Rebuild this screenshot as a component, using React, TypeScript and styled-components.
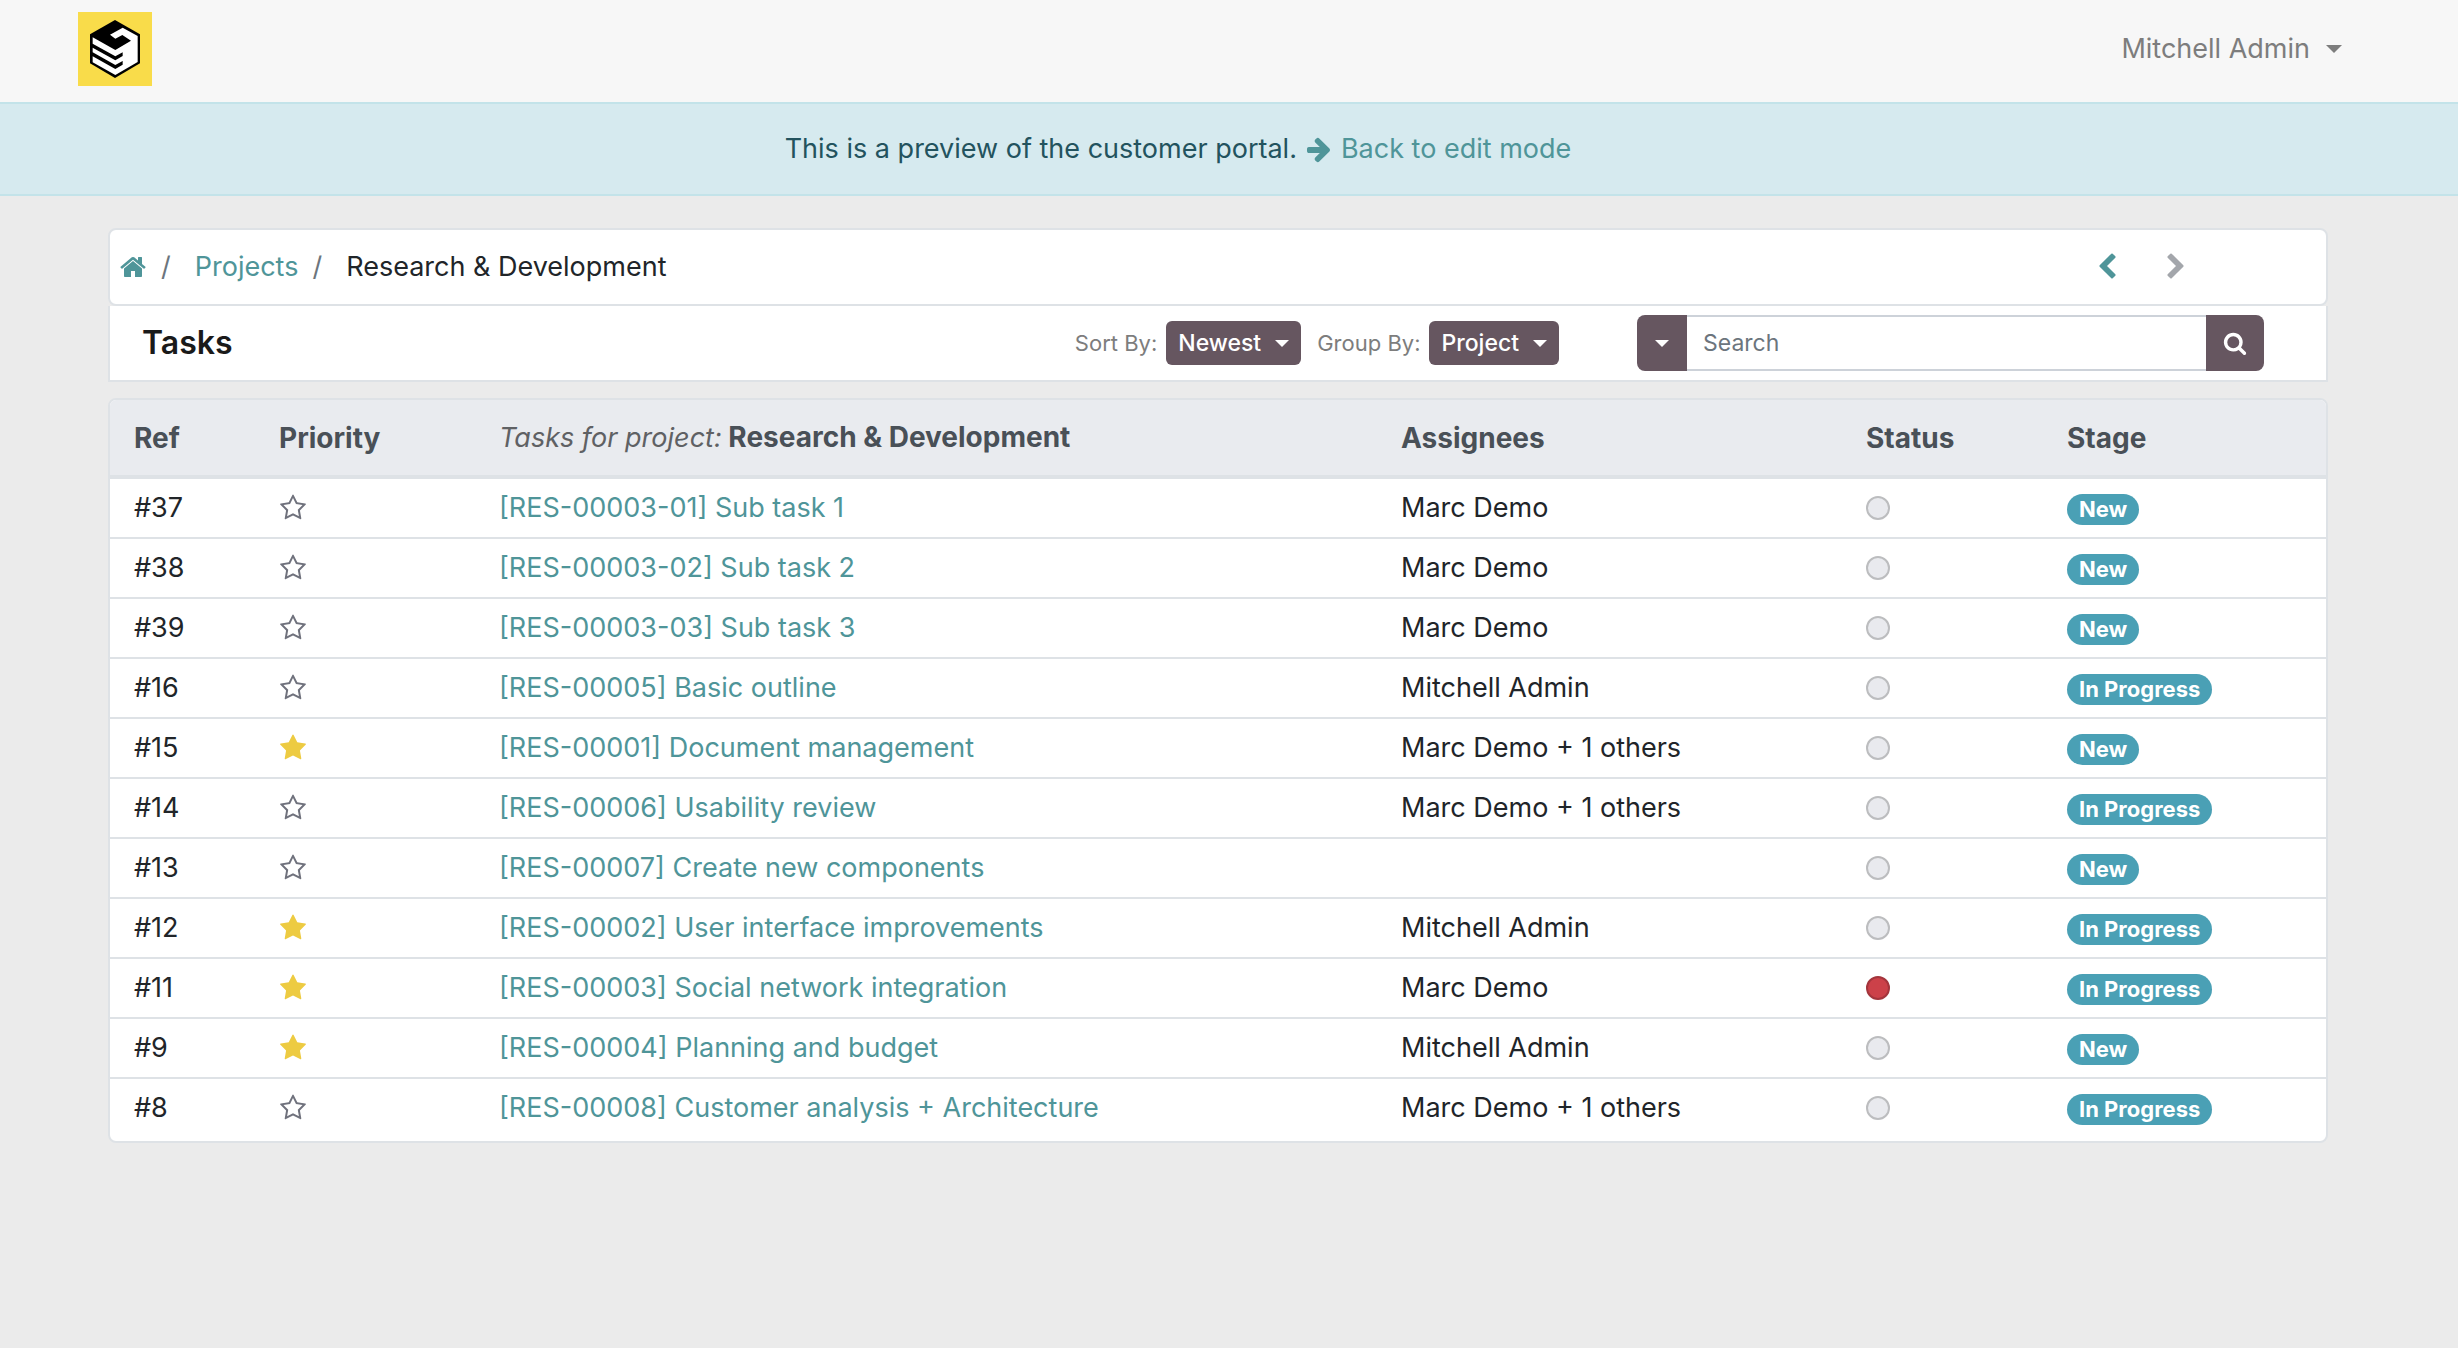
import React from 'react';
import styled, { createGlobalStyle } from 'styled-components';

const color = {
  page: '#ebebeb',
  text: '#212529',
  link: '#4f9599',
  muted: '#7d7d7d',
  border: '#dee2e6',
  headBg: '#e9ebef',
  plum: '#665660',
  badge: '#4aa0b5',
};

const GlobalStyle = createGlobalStyle`
  *, *::before, *::after { box-sizing: border-box; }
  body {
    margin: 0;
    background: ${color.page};
    color: ${color.text};
    font-family: Inter, "Liberation Sans", sans-serif;
    font-size: 27px;
    line-height: 40px;
  }
  button, input { font-family: inherit; }
`;

const Gutter = styled.div`
  padding-right: 22px;
`;

const Container = styled.div`
  max-width: 2280px;
  margin: 0 auto;
`;

const Navbar = styled.header`
  background: #f7f7f7;
`;

const NavbarRow = styled(Container)`
  display: flex;
  align-items: center;
  justify-content: space-between;
  padding: 12px 0 16px;
`;

const LogoLink = styled.a`
  display: block;
  width: 74px;
  height: 74px;
`;

const Caret = styled.span<{ $size?: number }>`
  border-top: ${(p) => p.$size ?? 7}px solid currentColor;
  border-left: ${(p) => p.$size ?? 7}px solid transparent;
  border-right: ${(p) => p.$size ?? 7}px solid transparent;
`;

const UserButton = styled.button`
  display: flex;
  align-items: center;
  gap: 16px;
  padding: 0 16px;
  border: 0;
  background: none;
  color: ${color.muted};
  font-size: 27px;
  line-height: 40px;
`;

const Banner = styled.div`
  background: #d6eaef;
  border: solid #c3e3e9;
  border-width: 2px 0;
  color: #23535e;
`;

const BannerText = styled.p`
  display: flex;
  justify-content: center;
  align-items: center;
  gap: 8px;
  margin: 0;
  padding: 25px 104px 25px 24px;
`;

const Link = styled.a`
  color: ${color.link};
  text-decoration: none;
`;

const IconLink = styled(Link)`
  display: flex;
  align-items: center;
  gap: 8px;
`;

const Glyph = styled.svg<{ $size?: number }>`
  display: block;
  flex: none;
  width: ${(p) => p.$size ?? 28}px;
  height: ${(p) => p.$size ?? 28}px;
  fill: currentColor;
`;

const Content = styled(Container)`
  padding: 32px 30px;
`;

const BreadcrumbBar = styled.div`
  display: flex;
  align-items: center;
  justify-content: space-between;
  padding: 17px 136px 17px 9px;
  border: 2px solid ${color.border};
  border-radius: 8px;
  background: #fff;
`;

const Crumbs = styled.ol`
  display: flex;
  align-items: center;
  margin: 0;
  padding: 0;
  list-style: none;
`;

const Crumb = styled.li`
  display: flex;
  align-items: center;

  & + &::before {
    content: '/';
    padding: 0 24px 0 14px;
    color: #6c757d;
  }
`;

const Pager = styled.div`
  display: flex;
  gap: 41px;
`;

const PagerLink = styled.a<{ $off?: boolean }>`
  color: ${(p) => (p.$off ? '#a3a6ab' : color.link)};
`;

const FilterBar = styled.div`
  display: flex;
  align-items: center;
  padding: 9px 62px 9px 32px;
  border: solid ${color.border};
  border-width: 0 2px 2px;
  background: #fff;
`;

const Title = styled.h1`
  margin: 0;
  font-size: 32px;
  font-weight: 600;
  color: #1a1a1a;
`;

const Filters = styled.div`
  display: flex;
  gap: 16px;
  margin-left: auto;
  margin-right: 78px;
`;

const Filter = styled.div`
  display: flex;
  align-items: center;
  gap: 9px;
`;

const FilterLabel = styled.span`
  font-size: 22px;
  color: ${color.muted};
`;

const FilterButton = styled.button`
  display: flex;
  align-items: center;
  gap: 14px;
  height: 44px;
  padding: 0 12px;
  border: 0;
  border-radius: 6px;
  background: ${color.plum};
  color: #fff;
  font-size: 23px;
  font-weight: 500;
`;

const SearchForm = styled.form`
  display: flex;
  width: 627px;
  height: 56px;
  border-radius: 8px;
  overflow: hidden;
`;

const SearchButton = styled.button<{ $width: number }>`
  display: flex;
  flex: none;
  align-items: center;
  justify-content: center;
  width: ${(p) => p.$width}px;
  padding: 0;
  border: 0;
  background: ${color.plum};
  color: #fff;
`;

const SearchInput = styled.input`
  flex: 1;
  min-width: 0;
  padding: 0 16px;
  border: solid #cdd2d9;
  border-width: 2px 0;
  border-radius: 0;
  background: #fff;
  color: ${color.text};
  font-size: 23px;

  &::placeholder {
    color: #6c757d;
    opacity: 1;
  }
`;

const TableCard = styled.div`
  margin-top: 16px;
  padding-bottom: 4px;
  border: 2px solid ${color.border};
  border-radius: 8px;
  background: #fff;
  overflow: hidden;
`;

const Table = styled.table`
  width: 100%;
  border-spacing: 0;
  table-layout: fixed;
`;

const HeadCell = styled.th<{ $width?: number }>`
  width: ${(p) => (p.$width ? `${p.$width}px` : 'auto')};
  padding: 17px 8px;
  border-bottom: 4px solid ${color.border};
  background: ${color.headBg};
  color: #495057;
  font-size: 28px;
  font-weight: 700;
  text-align: left;

  &:first-child { padding-left: 24px; }
`;

const GroupPrefix = styled.em`
  color: #5f6164;
  font-size: 27px;
  font-weight: 400;
`;

const Cell = styled.td`
  padding: 9px 8px;
  vertical-align: top;

  &:first-child { padding-left: 24px; }
  tr + tr > & { border-top: 2px solid ${color.border}; }
`;

const Mark = styled.span<{ $starred?: boolean }>`
  display: flex;
  align-items: center;
  height: 40px;
  color: ${(p) => (p.$starred ? '#edcb42' : '#6f717c')};
`;

const Dot = styled.span<{ $blocked?: boolean }>`
  width: 24px;
  height: 24px;
  border: 2px solid ${(p) => (p.$blocked ? '#a3353c' : '#bcbdbf')};
  border-radius: 50%;
  background: ${(p) => (p.$blocked ? '#cc4149' : '#e9eaee')};
`;

const Badge = styled.span`
  display: inline-block;
  padding: 0 12px;
  border-radius: 20px;
  background: ${color.badge};
  color: #fff;
  font-size: 22px;
  font-weight: 700;
  line-height: 31px;
`;

const paths = {
  home: 'M1472 992v480q0 26-19 45t-45 19h-384v-384h-256v384h-384q-26 0-45-19t-19-45v-480q0-1 .5-3t.5-3l575-474 575 474q1 2 1 6zm223-69l-62 74q-8 9-21 11h-3q-13 0-21-7l-692-577-692 577q-12 8-24 7-13-2-21-11l-62-74q-8-10-7-23.5t11-21.5l719-599q32-26 76-26t76 26l244 204v-195q0-14 9-23t23-9h192q14 0 23 9t9 23v408l219 182q10 8 11 21.5t-7 23.5z',
  search: 'M1216 832q0-185-131.5-316.5t-316.5-131.5-316.5 131.5-131.5 316.5 131.5 316.5 316.5 131.5 316.5-131.5 131.5-316.5zm512 832q0 52-38 90t-90 38q-54 0-90-38l-343-342q-179 124-399 124-143 0-273.5-55.5t-225-150-150-225-55.5-273.5 55.5-273.5 150-225 225-150 273.5-55.5 273.5 55.5 225 150 150 225 55.5 273.5q0 220-124 399l343 343q37 37 37 90z',
  left: 'M1427 301l-531 531 531 531q19 19 19 45t-19 45l-166 166q-19 19-45 19t-45-19l-742-742q-19-19-19-45t19-45l742-742q19-19 45-19t45 19l166 166q19 19 19 45t-19 45z',
  right: 'M1363 877l-742 742q-19 19-45 19t-45-19l-166-166q-19-19-19-45t19-45l531-531-531-531q-19-19-19-45t19-45l166-166q19-19 45-19t45 19l742 742q19 19 19 45t-19 45z',
  arrow: 'M1600 960q0 54-37 91l-651 651q-39 37-91 37-51 0-90-37l-75-75q-38-38-38-91t38-91l293-293h-704q-52 0-84.5-37.5t-32.5-90.5v-128q0-53 32.5-90.5t84.5-37.5h704l-293-294q-38-36-38-90t38-90l75-75q38-38 90-38 53 0 91 38l651 651q37 35 37 90z',
  star: 'M1728 647q0 22-26 48l-363 354 86 500q1 7 1 20 0 21-10.5 35.5t-30.5 14.5q-19 0-40-12l-449-236-449 236q-22 12-40 12-21 0-31.5-14.5t-10.5-35.5q0-6 2-20l86-500-364-354q-25-27-25-48 0-37 56-46l502-73 225-455q19-41 49-41t49 41l225 455 502 73q56 9 56 46z',
  starO: 'M1201 1004l306-297-422-62-189-382-189 382-422 62 306 297-73 421 378-199 377 199zm527-357q0 22-26 48l-363 354 86 500q1 7 1 20 0 50-41 50-19 0-40-12l-449-236-449 236q-22 12-40 12-21 0-31.5-14.5t-10.5-35.5q0-6 2-20l86-500-364-354q-25-27-25-48 0-37 56-46l502-73 225-455q19-41 49-41t49 41l225 455 502 73q56 9 56 46z',
};

function Icon({ name, size }: { name: keyof typeof paths; size?: number }) {
  return (
    <Glyph viewBox="0 0 1792 1792" $size={size} aria-hidden="true">
      <path d={paths[name]} />
    </Glyph>
  );
}

function Logo() {
  return (
    <svg viewBox="0 0 222 222" width="74" height="74" aria-hidden="true">
      <rect width="222" height="222" fill="#f9dc4a" />
      <path d="M111 24 186 67V154L111 198 36 154V67Z" fill="#000" />
      <path
        d="M44 76 112 114 159 86 133 69 112 80 96 68 134 47 179 72V150L112 189 44 151V133L112 171 134 158V147L112 159 44 121V107L112 145 134 132V121L112 133 44 95Z"
        fill="#fff"
      />
    </svg>
  );
}

type Task = {
  id: number;
  name: string;
  assignees?: string;
  stage: 'New' | 'In Progress';
  starred?: boolean;
  blocked?: boolean;
};

const tasks: Task[] = [
  { id: 37, name: '[RES-00003-01] Sub task 1', assignees: 'Marc Demo', stage: 'New' },
  { id: 38, name: '[RES-00003-02] Sub task 2', assignees: 'Marc Demo', stage: 'New' },
  { id: 39, name: '[RES-00003-03] Sub task 3', assignees: 'Marc Demo', stage: 'New' },
  { id: 16, name: '[RES-00005] Basic outline', assignees: 'Mitchell Admin', stage: 'In Progress' },
  { id: 15, name: '[RES-00001] Document management', assignees: 'Marc Demo + 1 others', stage: 'New', starred: true },
  { id: 14, name: '[RES-00006] Usability review', assignees: 'Marc Demo + 1 others', stage: 'In Progress' },
  { id: 13, name: '[RES-00007] Create new components', stage: 'New' },
  { id: 12, name: '[RES-00002] User interface improvements', assignees: 'Mitchell Admin', stage: 'In Progress', starred: true },
  { id: 11, name: '[RES-00003] Social network integration', assignees: 'Marc Demo', stage: 'In Progress', starred: true, blocked: true },
  { id: 9, name: '[RES-00004] Planning and budget', assignees: 'Mitchell Admin', stage: 'New', starred: true },
  { id: 8, name: '[RES-00008] Customer analysis + Architecture', assignees: 'Marc Demo + 1 others', stage: 'In Progress' },
];

function FilterMenu({ id, label, value }: { id: string; label: string; value: string }) {
  return (
    <Filter>
      <FilterLabel id={id}>{label}</FilterLabel>
      <FilterButton type="button" aria-haspopup="menu" aria-describedby={id}>
        {value}
        <Caret />
      </FilterButton>
    </Filter>
  );
}

function TaskRow({ task }: { task: Task }) {
  return (
    <tr>
      <Cell>#{task.id}</Cell>
      <Cell>
        <Mark $starred={task.starred}>
          <Icon name={task.starred ? 'star' : 'starO'} />
        </Mark>
      </Cell>
      <Cell>
        <Link href="#">{task.name}</Link>
      </Cell>
      <Cell>{task.assignees}</Cell>
      <Cell>
        <Mark>
          <Dot $blocked={task.blocked} />
        </Mark>
      </Cell>
      <Cell>
        <Badge>{task.stage}</Badge>
      </Cell>
    </tr>
  );
}

export default function App() {
  return (
    <>
      <GlobalStyle />
      <Navbar>
        <Gutter>
          <NavbarRow>
            <LogoLink href="#" aria-label="Home">
              <Logo />
            </LogoLink>
            <UserButton type="button" aria-haspopup="menu">
              Mitchell Admin
              <Caret $size={8} />
            </UserButton>
          </NavbarRow>
        </Gutter>
      </Navbar>
      <Banner>
        <Gutter>
          <BannerText>
            This is a preview of the customer portal.
            <IconLink href="#">
              <Icon name="arrow" />
              Back to edit mode
            </IconLink>
          </BannerText>
        </Gutter>
      </Banner>
      <Gutter as="main">
        <Content>
          <BreadcrumbBar>
            <nav aria-label="Breadcrumb">
              <Crumbs>
                <Crumb>
                  <IconLink href="#" aria-label="Home">
                    <Icon name="home" />
                  </IconLink>
                </Crumb>
                <Crumb>
                  <Link href="#">Projects</Link>
                </Crumb>
                <Crumb>Research &amp; Development</Crumb>
              </Crumbs>
            </nav>
            <Pager>
              <PagerLink href="#" aria-label="Previous">
                <Icon name="left" />
              </PagerLink>
              <PagerLink $off aria-label="Next" aria-disabled="true">
                <Icon name="right" />
              </PagerLink>
            </Pager>
          </BreadcrumbBar>
          <FilterBar>
            <Title>Tasks</Title>
            <Filters>
              <FilterMenu id="sort-label" label="Sort By:" value="Newest" />
              <FilterMenu id="group-label" label="Group By:" value="Project" />
            </Filters>
            <SearchForm role="search">
              <SearchButton type="button" $width={50} aria-label="Search in">
                <Caret />
              </SearchButton>
              <SearchInput type="text" placeholder="Search" aria-label="Search" />
              <SearchButton type="submit" $width={58} aria-label="Run search">
                <Icon name="search" size={24} />
              </SearchButton>
            </SearchForm>
          </FilterBar>
          <TableCard>
            <Table>
              <thead>
                <tr>
                  <HeadCell $width={161}>Ref</HeadCell>
                  <HeadCell $width={220}>Priority</HeadCell>
                  <HeadCell>
                    <GroupPrefix>Tasks for project:</GroupPrefix> Research &amp; Development
                  </HeadCell>
                  <HeadCell $width={465}>Assignees</HeadCell>
                  <HeadCell $width={201}>Status</HeadCell>
                  <HeadCell $width={267}>Stage</HeadCell>
                </tr>
              </thead>
              <tbody>
                {tasks.map((task) => (
                  <TaskRow key={task.id} task={task} />
                ))}
              </tbody>
            </Table>
          </TableCard>
        </Content>
      </Gutter>
    </>
  );
}
